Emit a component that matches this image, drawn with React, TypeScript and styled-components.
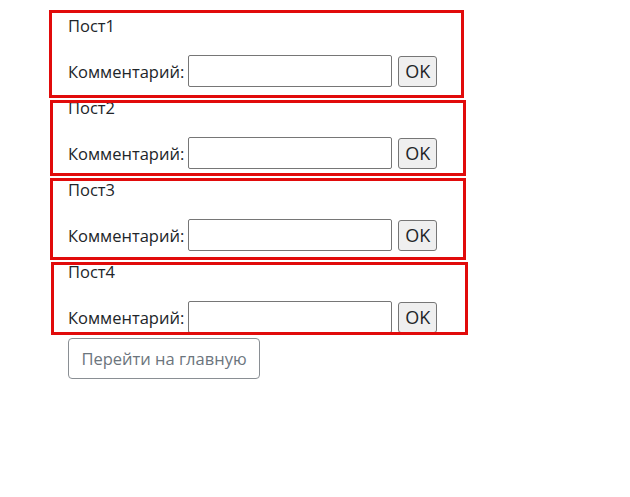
import React from 'react';
import styled, { createGlobalStyle } from 'styled-components';

const GlobalStyle = createGlobalStyle`
  body {
    margin: 0;
    background: #fff;
    font-family: "Open Sans", "Noto Sans", sans-serif;
    color: #212529;
  }
`;

type FrameBox = {
  top: number;
  left: number;
  width: number;
  height: number;
};

const Page = styled.div`
  width: 630px;
  height: 497px;
  padding: 10px 0 0 68px;
  box-sizing: border-box;
  display: flex;
  flex-direction: column;
  align-items: flex-start;
`;

const Post = styled.div`
  position: relative;
  height: 82px;
  display: flex;
  flex-direction: column;
`;

const Title = styled.div`
  font-size: 16.5px;
  line-height: 24px;
  margin-top: 4px;
`;

const Row = styled.form`
  display: flex;
  align-items: center;
  margin-top: 17px;
  margin-bottom: 0;
`;

const Label = styled.label`
  font-size: 16.5px;
  margin-right: 4px;
`;

const Input = styled.input`
  width: 204px;
  height: 32px;
  box-sizing: border-box;
  border: 1px solid #767676;
  border-radius: 2px;
  padding: 0 4px;
  font-size: 16px;
  outline: 0;
`;

const OkButton = styled.button`
  margin-left: 6px;
  width: 39px;
  height: 31px;
  box-sizing: border-box;
  border: 1px solid #767676;
  border-radius: 3px;
  background: #efefef;
  color: #212529;
  font-family: inherit;
  font-size: 18px;
  padding: 0;
`;

// red annotation frame drawn over each post
const Frame = styled.div`
  position: absolute;
  border: 3px solid #e10b0b;
  box-sizing: border-box;
  pointer-events: none;
`;

const HomeButton = styled.button`
  width: 192px;
  height: 41px;
  box-sizing: border-box;
  border: 1px solid #8a8f94;
  border-radius: 4px;
  background: #fff;
  color: #6c757d;
  font-family: inherit;
  font-size: 16.5px;
  padding: 0;
`;

const posts: { title: string; frame: FrameBox }[] = [
  { title: 'Пост1', frame: { top: 0, left: -19, width: 415, height: 88 } },
  { title: 'Пост2', frame: { top: 8, left: -18, width: 416, height: 76 } },
  { title: 'Пост3', frame: { top: 4, left: -18, width: 416, height: 82 } },
  { title: 'Пост4', frame: { top: 6, left: -17, width: 417, height: 73 } },
];

export default function App() {
  return (
    <>
      <GlobalStyle />
      <Page>
        {posts.map((p) => (
          <Post key={p.title}>
            <Title>{p.title}</Title>
            <Row onSubmit={(e) => e.preventDefault()}>
              <Label>Комментарий:</Label>
              <Input type="text" />
              <OkButton type="submit">OK</OkButton>
            </Row>
            <Frame style={p.frame} />
          </Post>
        ))}
        <HomeButton>Перейти на главную</HomeButton>
      </Page>
    </>
  );
}
